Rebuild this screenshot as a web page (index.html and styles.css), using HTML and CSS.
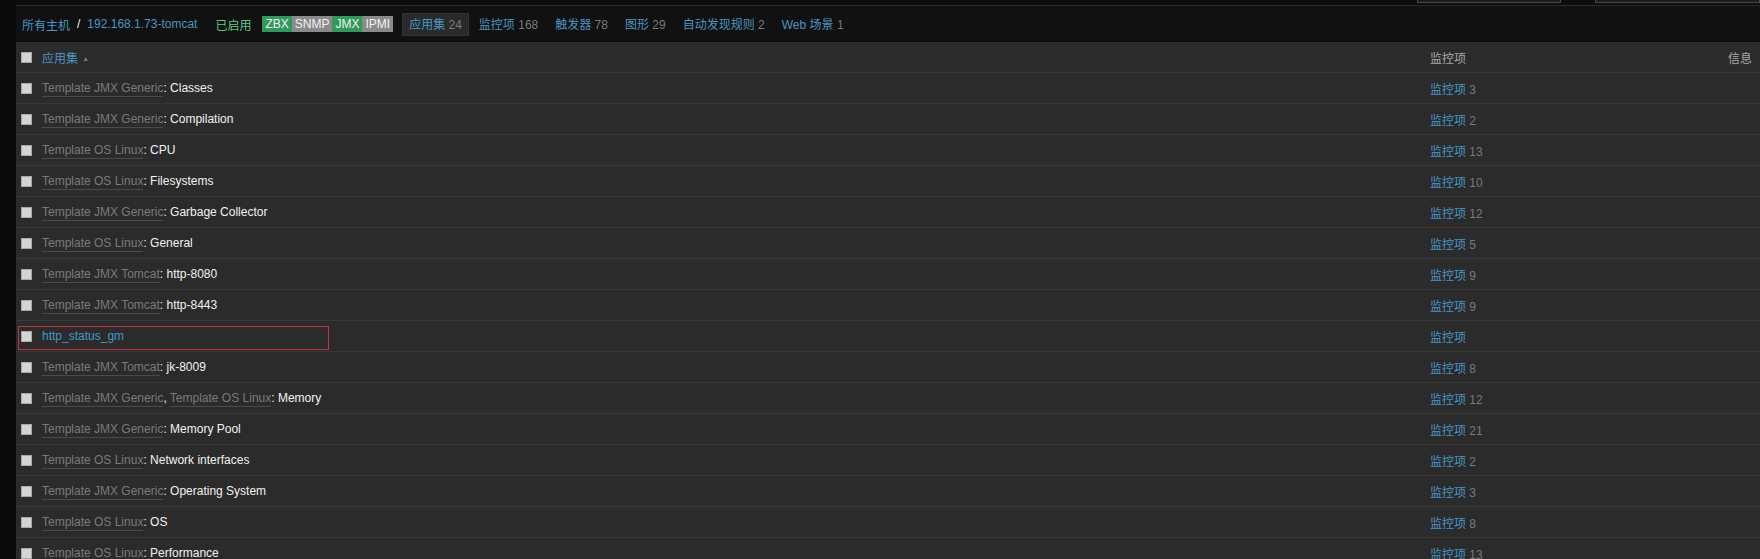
FILE: index.html
```html
<!DOCTYPE html>
<html lang="zh-CN">
<head>
<meta charset="utf-8">
<title>应用集</title>
<link rel="stylesheet" href="styles.css">
</head>
<body>
<div class="side"></div>
<div class="main">
  <div class="topstrip">
    <div class="edge edge-a"></div>
    <div class="edge edge-b"></div>
  </div>
  <div class="navbar">
    <a class="crumb link">所有主机</a>
    <span class="sep">/</span>
    <a class="crumb link">192.168.1.73-tomcat</a>
    <span class="enabled">已启用</span>
    <span class="tags">
      <span class="tag on">ZBX</span><span class="tag off">SNMP</span><span class="tag on">JMX</span><span class="tag off">IPMI</span>
    </span>
    <div class="tabs">
      <span class="tab active"><a class="link">应用集</a> <span class="num">24</span></span>
      <span class="tab"><a class="link">监控项</a> <span class="num">168</span></span>
      <span class="tab"><a class="link">触发器</a> <span class="num">78</span></span>
      <span class="tab"><a class="link">图形</a> <span class="num">29</span></span>
      <span class="tab"><a class="link">自动发现规则</a> <span class="num">2</span></span>
      <span class="tab"><a class="link">Web 场景</a> <span class="num">1</span></span>
    </div>
  </div>
  <div class="table">
    <div class="row head">
      <span class="cb"><input type="checkbox"></span>
      <span class="name"><a class="link">应用集</a> <span class="arrow">▲</span></span>
      <span class="items hcol">监控项</span>
      <span class="info hcol">信息</span>
    </div>
    <div class="row"><span class="cb"><input type="checkbox"></span><span class="name"><a class="tpl">Template JMX Generic</a>: Classes</span><span class="items"><a class="link">监控项</a> <span class="num">3</span></span><span class="info"></span></div>
    <div class="row"><span class="cb"><input type="checkbox"></span><span class="name"><a class="tpl">Template JMX Generic</a>: Compilation</span><span class="items"><a class="link">监控项</a> <span class="num">2</span></span><span class="info"></span></div>
    <div class="row"><span class="cb"><input type="checkbox"></span><span class="name"><a class="tpl">Template OS Linux</a>: CPU</span><span class="items"><a class="link">监控项</a> <span class="num">13</span></span><span class="info"></span></div>
    <div class="row"><span class="cb"><input type="checkbox"></span><span class="name"><a class="tpl">Template OS Linux</a>: Filesystems</span><span class="items"><a class="link">监控项</a> <span class="num">10</span></span><span class="info"></span></div>
    <div class="row"><span class="cb"><input type="checkbox"></span><span class="name"><a class="tpl">Template JMX Generic</a>: Garbage Collector</span><span class="items"><a class="link">监控项</a> <span class="num">12</span></span><span class="info"></span></div>
    <div class="row"><span class="cb"><input type="checkbox"></span><span class="name"><a class="tpl">Template OS Linux</a>: General</span><span class="items"><a class="link">监控项</a> <span class="num">5</span></span><span class="info"></span></div>
    <div class="row"><span class="cb"><input type="checkbox"></span><span class="name"><a class="tpl">Template JMX Tomcat</a>: http-8080</span><span class="items"><a class="link">监控项</a> <span class="num">9</span></span><span class="info"></span></div>
    <div class="row"><span class="cb"><input type="checkbox"></span><span class="name"><a class="tpl">Template JMX Tomcat</a>: http-8443</span><span class="items"><a class="link">监控项</a> <span class="num">9</span></span><span class="info"></span></div>
    <div class="row marked"><span class="cb"><input type="checkbox"></span><span class="name"><a class="link">http_status_gm</a></span><span class="items"><a class="link">监控项</a></span><span class="info"></span><span class="redbox"></span></div>
    <div class="row"><span class="cb"><input type="checkbox"></span><span class="name"><a class="tpl">Template JMX Tomcat</a>: jk-8009</span><span class="items"><a class="link">监控项</a> <span class="num">8</span></span><span class="info"></span></div>
    <div class="row"><span class="cb"><input type="checkbox"></span><span class="name"><a class="tpl">Template JMX Generic</a>, <a class="tpl">Template OS Linux</a>: Memory</span><span class="items"><a class="link">监控项</a> <span class="num">12</span></span><span class="info"></span></div>
    <div class="row"><span class="cb"><input type="checkbox"></span><span class="name"><a class="tpl">Template JMX Generic</a>: Memory Pool</span><span class="items"><a class="link">监控项</a> <span class="num">21</span></span><span class="info"></span></div>
    <div class="row"><span class="cb"><input type="checkbox"></span><span class="name"><a class="tpl">Template OS Linux</a>: Network interfaces</span><span class="items"><a class="link">监控项</a> <span class="num">2</span></span><span class="info"></span></div>
    <div class="row"><span class="cb"><input type="checkbox"></span><span class="name"><a class="tpl">Template JMX Generic</a>: Operating System</span><span class="items"><a class="link">监控项</a> <span class="num">3</span></span><span class="info"></span></div>
    <div class="row"><span class="cb"><input type="checkbox"></span><span class="name"><a class="tpl">Template OS Linux</a>: OS</span><span class="items"><a class="link">监控项</a> <span class="num">8</span></span><span class="info"></span></div>
    <div class="row"><span class="cb"><input type="checkbox"></span><span class="name"><a class="tpl">Template OS Linux</a>: Performance</span><span class="items"><a class="link">监控项</a> <span class="num">13</span></span><span class="info"></span></div>
  </div>
</div>
</body>
</html>
```

FILE: styles.css
```css
html, body {
  margin: 0;
  padding: 0;
  height: 100%;
  overflow: hidden;
}
body {
  background: #0b0b0b;
  font-family: "Liberation Sans", Arial, "Noto Sans CJK SC", sans-serif;
  font-size: 12px;
  color: #f2f2f2;
  display: flex;
}
.side {
  width: 16px;
  flex: none;
  background: #0a0a0a;
}
.main {
  flex: 1;
  display: flex;
  flex-direction: column;
  min-width: 0;
  overflow: hidden;
}
.topstrip {
  flex: none;
  height: 5px;
  background: #0d0d0d;
  border-bottom: 1px solid #2a2a2a;
  display: flex;
  align-items: flex-start;
}
.edge {
  height: 2px;
  background: #1c1c1c;
  border: 1px solid #4a4a4a;
  border-top: none;
}
.edge-a {
  margin-left: 1401px;
  width: 142px;
}
.edge-b {
  margin-left: 34px;
  flex: 1;
}
.navbar {
  flex: none;
  height: 36px;
  background: #111111;
  border-bottom: 1px solid #0a0a0a;
  box-sizing: border-box;
  display: flex;
  align-items: center;
  padding-left: 6px;
  padding-top: 1px;
  white-space: nowrap;
}
a {
  text-decoration: none;
  cursor: pointer;
}
.link {
  color: #4796c4;
}
.num {
  color: #7a7a7a;
}
.sep {
  color: #f2f2f2;
  margin: 0 7px;
}
.enabled {
  color: #59c98a;
  margin-left: 18px;
}
.tags {
  display: flex;
  margin-left: 11px;
  height: 16px;
  line-height: 16px;
}
.tag {
  padding: 0 3px;
  color: #f2f2f2;
}
.tag.on {
  background: #2f9a5a;
}
.tag.off {
  background: #8a8a8a;
}
.tabs {
  display: flex;
  gap: 3px;
  margin-left: 9px;
}
.tab {
  padding: 0 6px;
  height: 23px;
  line-height: 22px;
  box-sizing: border-box;
  border: 1px solid transparent;
}
.tab.active {
  background: #2a2a2a;
  border-color: #333333;
}
.table {
  flex: 1 0 auto;
  background: #2b2b2b;
}
.row {
  position: relative;
  display: grid;
  grid-template-columns: 26px 1388px 1fr auto;
  align-items: center;
  height: 31px;
  box-sizing: border-box;
  border-bottom: 1px solid #383838;
  white-space: nowrap;
}
.cb {
  display: flex;
  align-items: center;
  padding-left: 5px;
}
input[type="checkbox"] {
  appearance: none;
  -webkit-appearance: none;
  width: 11px;
  height: 11px;
  margin: 0;
  background: #d4d4d4;
  border: 1px solid #a8a8a8;
  box-sizing: border-box;
}
.name {
  color: #f2f2f2;
}
.tpl {
  color: #7a7a7a;
  border-bottom: 1px solid #4a4a4a;
  padding-bottom: 1px;
}
.arrow {
  color: #7a7a7a;
  font-size: 7px;
  vertical-align: 2px;
  margin-left: 1px;
}
.hcol {
  color: #a8a8a8;
}
.info {
  padding-right: 8px;
  text-align: right;
}
.redbox {
  position: absolute;
  left: 2px;
  top: 5px;
  width: 311px;
  height: 24px;
  box-sizing: border-box;
  border: 1px solid #c8323c;
  pointer-events: none;
}
```
